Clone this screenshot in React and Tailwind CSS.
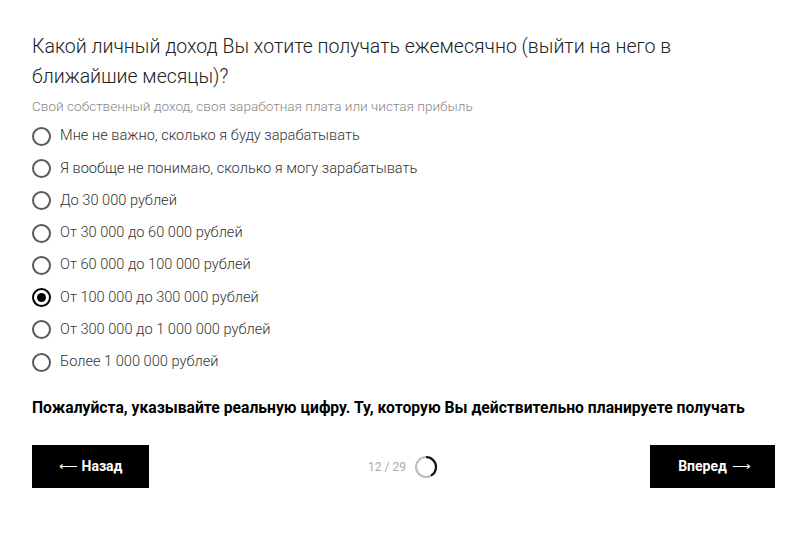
import React from "react";

const options = [
  "Мне не важно, сколько я буду зарабатывать",
  "Я вообще не понимаю, сколько я могу зарабатывать",
  "До 30 000 рублей",
  "От 30 000 до 60 000 рублей",
  "От 60 000 до 100 000 рублей",
  "От 100 000 до 300 000 рублей",
  "От 300 000 до 1 000 000 рублей",
  "Более 1 000 000 рублей",
];

function Radio({ checked }) {
  return (
    <span
      className={
        checked
          ? "flex h-[19px] w-[19px] shrink-0 items-center justify-center rounded-full border-2 border-black"
          : "flex h-[19px] w-[19px] shrink-0 items-center justify-center rounded-full border-2 border-[#5a5a5a]"
      }
    >
      {checked && <span className="h-[9px] w-[9px] rounded-full bg-black" />}
    </span>
  );
}

export default function App() {
  const r = 10;
  const c = 2 * Math.PI * r;
  const progress = 12 / 29;
  return (
    <div className="min-h-[534px] w-[800px] bg-white pl-[32px] pr-[25px] pt-[32px] font-['Roboto',sans-serif]">
      <h1 className="text-[19.5px] font-light leading-[30px] text-[#222]">
        Какой личный доход Вы хотите получать ежемесячно (выйти на него в ближайшие месяцы)?
      </h1>
      <p className="mt-[5px] text-[13.6px] font-light leading-[18px] text-[#888]">
        Свой собственный доход, своя заработная плата или чистая прибыль
      </p>
      <div className="mt-[5px] flex flex-col">
        {options.map((o, i) => (
          <div key={i} className="flex h-[32.3px] items-center gap-[9px]">
            <Radio checked={i === 5} />
            <span className="text-[14.6px] font-light text-[#333]">{o}</span>
          </div>
        ))}
      </div>
      <p className="mt-[20px] text-[15.7px] font-bold leading-[20px] text-black">
        Пожалуйста, указывайте реальную цифру. Ту, которую Вы действительно планируете получать
      </p>
      <div className="mt-[27px] flex items-center justify-between">
        <button className="flex h-[43px] w-[117px] items-center justify-center bg-black text-[14px] font-bold text-white">
          <span className="mr-[4px] text-[13px] font-normal">⟵</span>Назад
        </button>
        <div className="ml-[219px] flex items-center gap-[8px]">
          <span className="text-[12px] text-[#aaa]">12 / 29</span>
          <svg width="24" height="24" viewBox="0 0 24 24">
            <circle cx="12" cy="12" r={r} fill="none" stroke="#bbb" strokeWidth="2" />
            <circle
              cx="12"
              cy="12"
              r={r}
              fill="none"
              stroke="#111"
              strokeWidth="2.2"
              strokeDasharray={`${c * progress} ${c}`}
              transform="rotate(-90 12 12)"
            />
          </svg>
        </div>
        <div className="flex-1" />
        <button className="flex h-[43px] w-[125px] items-center justify-center bg-black pl-[4px] text-[14px] font-bold text-white">
          Вперед<span className="ml-[5px] text-[13px] font-normal">⟶</span>
        </button>
      </div>
    </div>
  );
}
